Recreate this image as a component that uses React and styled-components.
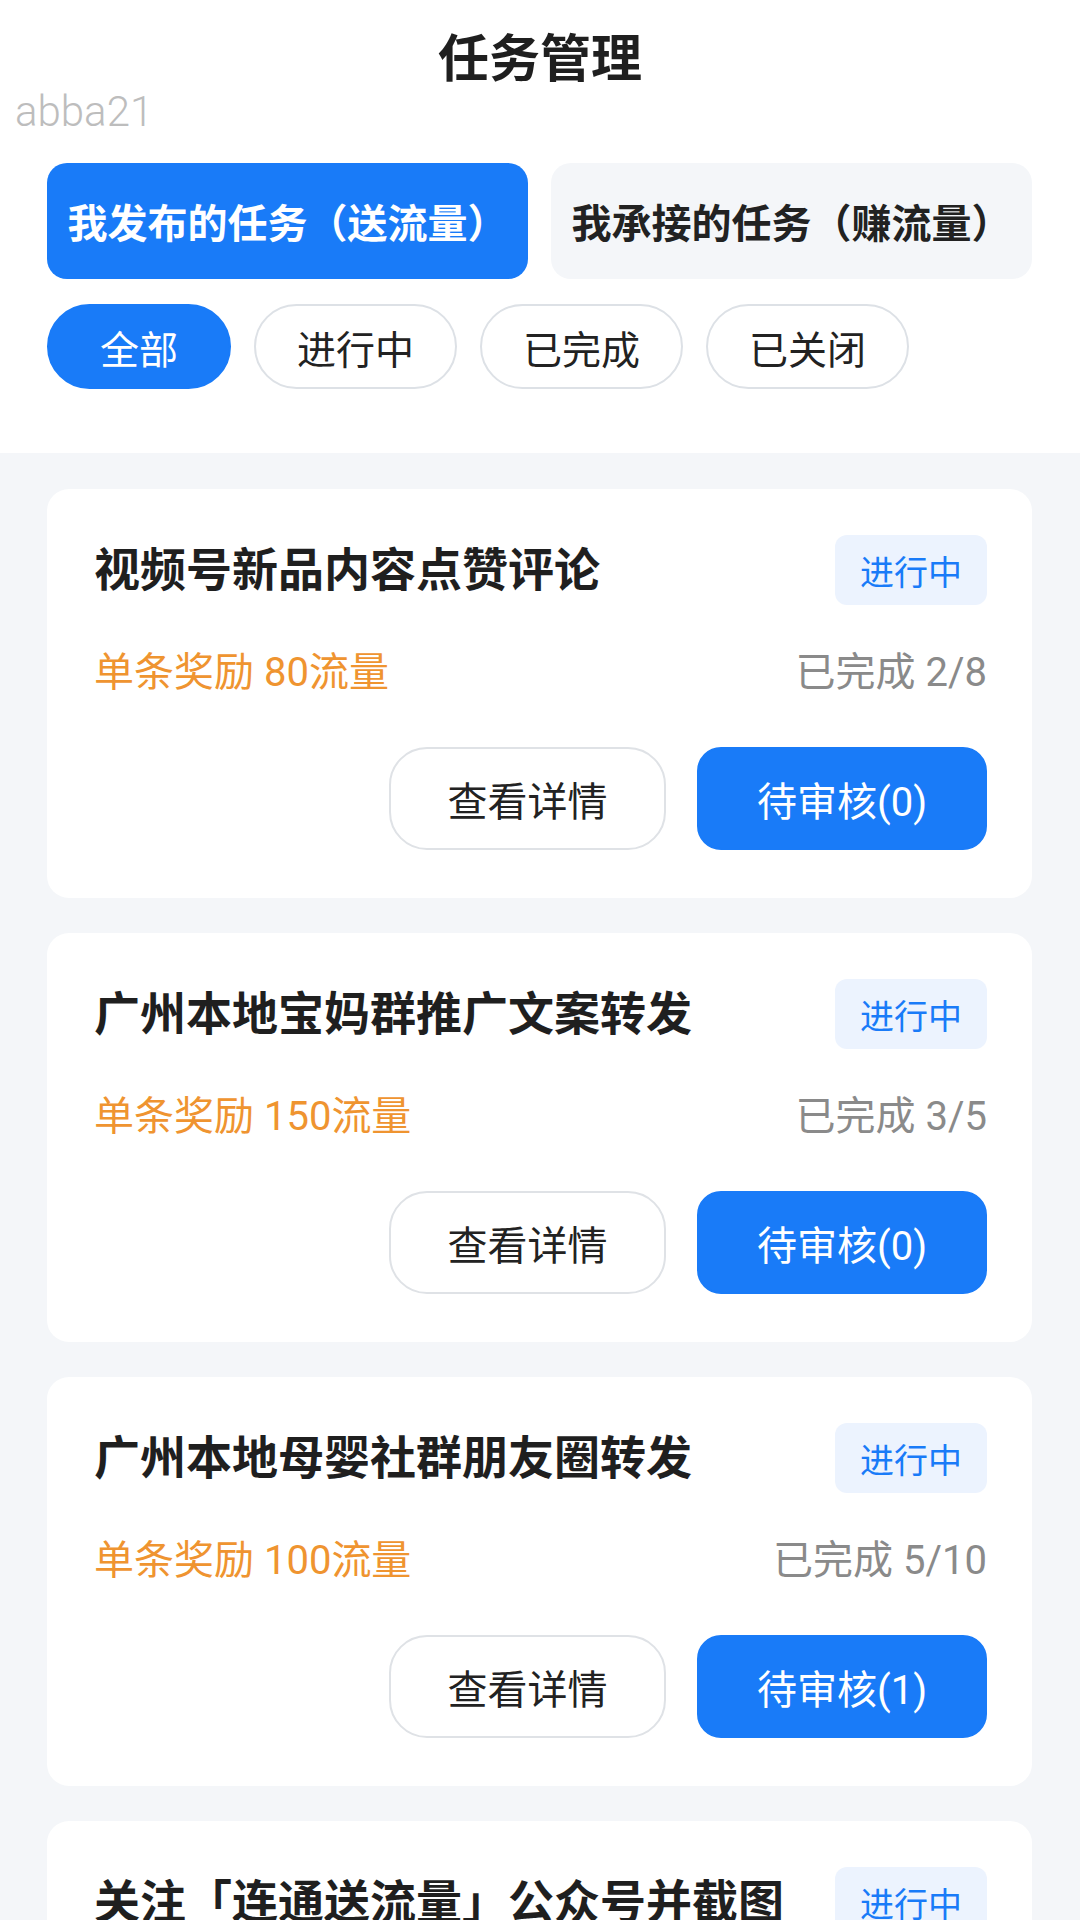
import React from "react";
import styled, { createGlobalStyle } from "styled-components";

const GlobalStyle = createGlobalStyle`
  html, body {
    margin: 0;
    padding: 0;
    background: #f4f6f9;
  }
  * {
    box-sizing: border-box;
  }
  body {
    font-family: Roboto, "Noto Sans CJK SC", "Noto Sans", sans-serif;
    color: #222;
  }
`;

const Page = styled.div`
  width: 1080px;
  height: 1920px;
  overflow: hidden;
  background: #f4f6f9;
`;

const Header = styled.header`
  background: #fff;
  padding: 28px 0 64px;
`;

const Title = styled.h1`
  margin: 0;
  text-align: center;
  font-size: 51px;
  line-height: 63px;
  font-weight: 700;
  color: #1f1f1f;
`;

const Watermark = styled.div`
  padding-left: 15px;
  font-size: 42px;
  line-height: 42px;
  font-weight: 300;
  color: #bdbdbd;
`;

const TabRow = styled.div`
  display: grid;
  grid-template-columns: 1fr 1fr;
  gap: 23px;
  margin-top: 30px;
  padding: 0 48px 0 47px;
`;

const Tab = styled.button`
  height: 116px;
  border: none;
  border-radius: 20px;
  padding: 0 20px;
  font-family: inherit;
  font-size: 40px;
  font-weight: 700;
  white-space: nowrap;
  background: ${(p) => (p.$active ? "#197bf8" : "#f4f6f9")};
  color: ${(p) => (p.$active ? "#fff" : "#222")};
`;

const FilterRow = styled.div`
  display: flex;
  gap: 23px;
  margin-top: 25px;
  padding: 0 47px;
`;

const Pill = styled.button`
  height: 85px;
  min-width: 184px;
  padding: 0 41px;
  border-radius: 43px;
  font-family: inherit;
  font-size: 39px;
  font-weight: 400;
  border: 2px solid ${(p) => (p.$active ? "#197bf8" : "#dde1e6")};
  background: ${(p) => (p.$active ? "#197bf8" : "#fff")};
  color: ${(p) => (p.$active ? "#fff" : "#222")};
`;

const List = styled.main`
  display: flex;
  flex-direction: column;
  gap: 35px;
  padding: 36px 48px 36px 47px;
`;

const Card = styled.section`
  background: #fff;
  border-radius: 22px;
  padding: 46px 45px 48px 47px;
`;

const CardHead = styled.div`
  display: flex;
  align-items: center;
  justify-content: space-between;
`;

const CardTitle = styled.h2`
  margin: 0;
  font-size: 46px;
  line-height: 56px;
  font-weight: 700;
  color: #1f1f1f;
  white-space: nowrap;
`;

const Badge = styled.span`
  flex-shrink: 0;
  height: 70px;
  padding: 0 25px;
  display: flex;
  align-items: center;
  border-radius: 12px;
  background: #ecf3fe;
  color: #197bf8;
  font-size: 34px;
`;

const InfoRow = styled.div`
  display: flex;
  justify-content: space-between;
  margin-top: 44px;
  font-size: 40px;
  line-height: 48px;
`;

const Reward = styled.span`
  color: #ef9430;
`;

const Progress = styled.span`
  color: #8a8a8a;
`;

const Actions = styled.div`
  display: flex;
  justify-content: flex-end;
  gap: 31px;
  margin-top: 50px;
`;

const ActionButton = styled.button`
  height: 103px;
  width: ${(p) => (p.$primary ? "290px" : "277px")};
  border-radius: ${(p) => (p.$primary ? "24px" : "38px")};
  border: 2px solid ${(p) => (p.$primary ? "#197bf8" : "#dfe2e6")};
  background: ${(p) => (p.$primary ? "#197bf8" : "#fff")};
  color: ${(p) => (p.$primary ? "#fff" : "#222")};
  font-family: inherit;
  font-size: 40px;
`;

const tasks = [
  { title: "视频号新品内容点赞评论", reward: 80, done: 2, total: 8, pending: 0 },
  { title: "广州本地宝妈群推广文案转发", reward: 150, done: 3, total: 5, pending: 0 },
  { title: "广州本地母婴社群朋友圈转发", reward: 100, done: 5, total: 10, pending: 1 },
  { title: "关注「连通送流量」公众号并截图", reward: 50, done: 6, total: 20, pending: 2 },
];

const filters = ["全部", "进行中", "已完成", "已关闭"];

const TaskCard = ({ task }) => (
  <Card>
    <CardHead>
      <CardTitle>{task.title}</CardTitle>
      <Badge>进行中</Badge>
    </CardHead>
    <InfoRow>
      <Reward>单条奖励 {task.reward}流量</Reward>
      <Progress>
        已完成 {task.done}/{task.total}
      </Progress>
    </InfoRow>
    <Actions>
      <ActionButton>查看详情</ActionButton>
      <ActionButton $primary>待审核({task.pending})</ActionButton>
    </Actions>
  </Card>
);

const App = () => {
  return (
    <Page>
      <GlobalStyle />
      <Header>
        <Title>任务管理</Title>
        <Watermark>abba21</Watermark>
        <TabRow>
          <Tab $active>我发布的任务（送流量）</Tab>
          <Tab>我承接的任务（赚流量）</Tab>
        </TabRow>
        <FilterRow>
          {filters.map((f, i) => (
            <Pill key={f} $active={i === 0}>
              {f}
            </Pill>
          ))}
        </FilterRow>
      </Header>
      <List>
        {tasks.map((t) => (
          <TaskCard key={t.title} task={t} />
        ))}
      </List>
    </Page>
  );
};

export default App;
